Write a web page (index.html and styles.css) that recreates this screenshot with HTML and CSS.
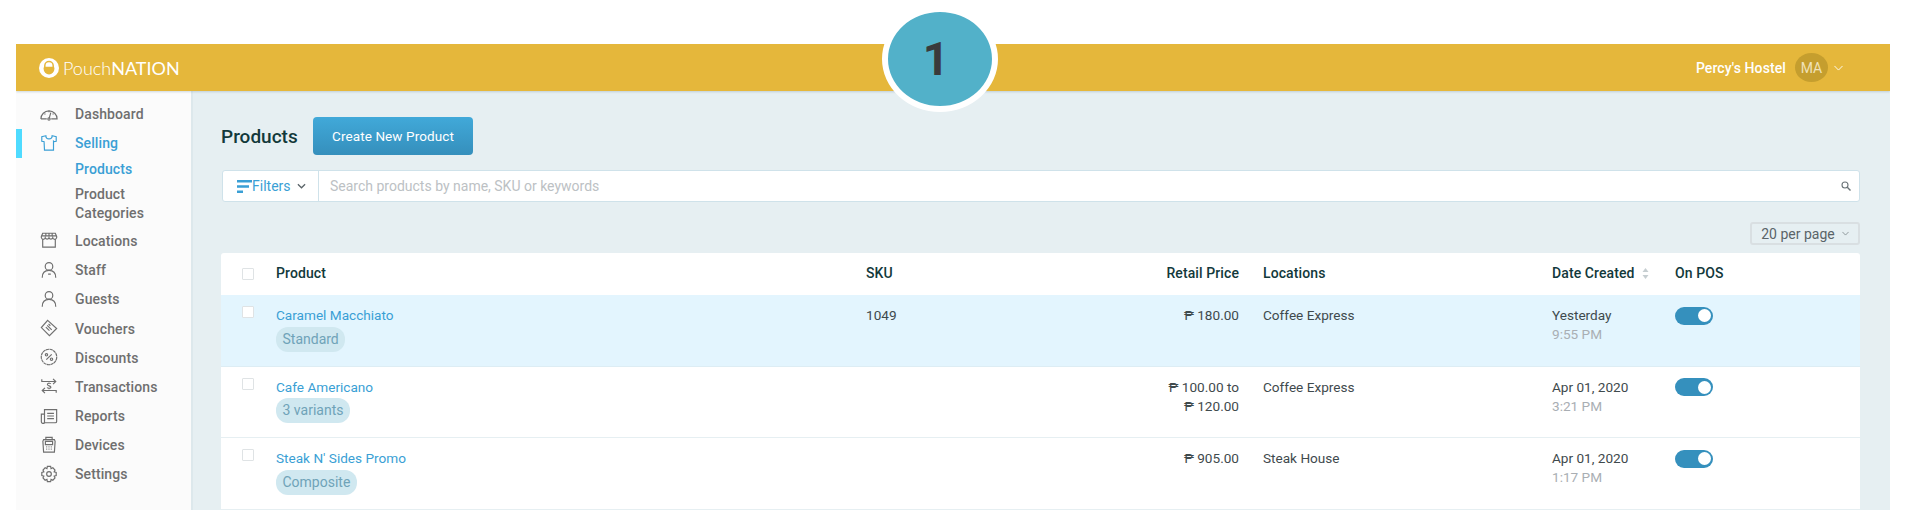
FILE: index.html
```html
<!DOCTYPE html>
<html lang="en">
<head>
<meta charset="utf-8">
<title>Products</title>
<link rel="stylesheet" href="styles.css">
</head>
<body>
<div class="app">
  <header class="topbar">
    <div class="brand">
      <svg class="brand-icon" viewBox="0 0 20 20"><circle cx="10" cy="10" r="10" fill="#fff"/><path d="M4.600 9.600h10.800v1.400a5.400 5.400 0 0 1-10.800 0z" fill="#E5B73B"/><path d="M5.800 9.600V7.800a4.200 4.200 0 0 1 8.400 0v1.800M5 9.600h10" fill="none" stroke="#E5B73B" stroke-width="1.500"/></svg>
      <span class="wordmark">Pouch<b>NATION</b></span>
    </div>
    <div class="account">
      <span class="account-name">Percy's Hostel</span>
      <span class="avatar">MA</span>
      <svg class="account-chevron" viewBox="0 0 10 6"><path d="M.5.700 5 5.300 9.500.7" fill="none" stroke="#fff" stroke-width="1"/></svg>
    </div>
  </header>
  <div class="body">
    <aside class="sidebar">
      <nav class="nav">
        <a class="nav-item"><svg class="nav-icon" viewBox="0 0 20 20"><path d="M1 15.500A9 9 0 0 1 19 15.500H12.500M7.500 15.500H1M10 15.500l2-7" /><circle cx="10" cy="15.500" r="1.300"/><path d="M5 9.500l1 1M15 9.500l-1 1M10 6.500v1.500"/></svg>Dashboard</a>
        <a class="nav-item is-active"><svg class="nav-icon" viewBox="0 0 20 20"><path d="M6.500 2 2 3v5l2.500.5V8L5 18h10V8l.5.5L18 8V3l-4.500-1a3.500 3.500 0 0 1-7 0z"/></svg>Selling</a>
        <a class="nav-sub is-current">Products</a>
        <a class="nav-sub">Product Categories</a>
        <a class="nav-item"><svg class="nav-icon" viewBox="0 0 20 20"><path d="M3 2.500h14l1.500 3.500v1.500a2.200 2.200 0 0 1-4.300 0 2.200 2.200 0 0 1-4.200 0 2.200 2.200 0 0 1-4.200 0 2.200 2.200 0 0 1-4.300 0V6zM3 9.500V18h14V9.500M1.500 5.500h17M6.500 2.500v3M13.500 2.500v3M10 2.500v3"/></svg>Locations</a>
        <a class="nav-item"><svg class="nav-icon" viewBox="0 0 20 20"><circle cx="10" cy="6" r="4.200"/><path d="M2.500 18.500c0-5 3-8 7.500-8s7.500 3 7.500 8M9 14.500h3"/></svg>Staff</a>
        <a class="nav-item"><svg class="nav-icon" viewBox="0 0 20 20"><circle cx="10" cy="6" r="4.200"/><path d="M2.500 18.500c0-5 3-8 7.500-8s7.500 3 7.500 8"/></svg>Guests</a>
        <a class="nav-item"><svg class="nav-icon" viewBox="0 0 20 20"><path d="M8.500 1.500 18.500 10.500 10.500 18.500 1.500 9.500zM8 7l5 5M6.500 9l4 4M9.500 5.500l2 2" /></svg>Vouchers</a>
        <a class="nav-item"><svg class="nav-icon" viewBox="0 0 20 20"><circle cx="10" cy="10" r="8.600" stroke-dasharray="3.600 .5"/><path d="M13 7l-6 6"/><circle cx="7.200" cy="7.600" r="1.300"/><circle cx="12.800" cy="12.400" r="1.300"/></svg>Discounts</a>
        <a class="nav-item"><svg class="nav-icon" viewBox="0 0 20 20"><path d="M2 2.500v2.500h15M14.500 2l3 3-3 3M18 17.500V15H3M5.500 12l-3 3 3 3"/><path d="M12 7.500c-.5-.8-3.800-1-3.800.8s3.900 1.300 3.900 3-3.500 1.400-4.200.4M10 6v1M10 12.500v1"/></svg>Transactions</a>
        <a class="nav-item"><svg class="nav-icon" viewBox="0 0 20 20"><path d="M5 17.500h12a1.500 1.500 0 0 0 1.500-1.500V3H5v14.500a2 2 0 0 1-3.500-1V8H5M8 7h7.500M8 10h7.500M8 13h7.500"/></svg>Reports</a>
        <a class="nav-item"><svg class="nav-icon" viewBox="0 0 20 20"><path d="M6.500 4V1.500h7V4M4 4h12l.8 2-.8 12H4L3.200 6zM6 6h8v3.500H6zM7 12h1M9.500 12h1M12 12h1M7 14.500h1M9.500 14.500h1M12 14.500h1"/></svg>Devices</a>
        <a class="nav-item"><svg class="nav-icon" viewBox="0 0 20 20"><path d="M8.200 1.500h3.600l.5 2.500 2-.9 2.400 2.500-1 2 2.300.7v3.400l-2.300.7 1 2-2.400 2.500-2-.9-.5 2.500H8.200l-.5-2.500-2 .9-2.400-2.500 1-2-2.300-.7V8.300l2.300-.7-1-2 2.400-2.500 2 .9z"/><circle cx="10" cy="10" r="2.600"/></svg>Settings</a>
      </nav>
    </aside>
    <main class="content">
      <div class="page-head">
        <h1 class="page-title">Products</h1>
        <button class="btn-create">Create New Product</button>
      </div>
      <div class="search-bar">
        <div class="filters">
          <svg class="filters-icon" viewBox="0 0 15 13"><path d="M0 1.300h15M0 6.500h12M0 11.700h6" fill="none" stroke="#3A9FD5" stroke-width="2.400"/></svg>
          <span>Filters</span>
          <svg class="filters-chevron" viewBox="0 0 10 6"><path d="M1 1l4 4 4-4" fill="none" stroke="#5a6468" stroke-width="1.400"/></svg>
        </div>
        <div class="search-field">
          <span class="placeholder">Search products by name, SKU or keywords</span>
          <svg class="search-icon" viewBox="0 0 10 10"><circle cx="4" cy="4" r="3" fill="none" stroke="#6b7478" stroke-width="1.100"/><path d="M6.300 6.300 9.500 9.500" stroke="#6b7478" stroke-width="1.400"/></svg>
        </div>
      </div>
      <div class="per-page-row">
        <div class="per-page">20 per page <svg class="per-chevron" viewBox="0 0 8 5"><path d="M.5.700 4 4.300 7.500.7" fill="none" stroke="#7a8488" stroke-width=".9"/></svg></div>
      </div>
      <section class="table">
        <div class="row row-head">
          <span class="check"></span>
          <span>Product</span>
          <span>SKU</span>
          <span class="num">Retail Price</span>
          <span>Locations</span>
          <span class="sortable">Date Created <svg class="sort-icon" viewBox="0 0 7 11"><path d="M3.500 0 6.500 4h-6zM3.500 11 .5 7h6z" fill="#c6ced1"/></svg></span>
          <span>On POS</span>
        </div>
        <div class="row is-selected">
          <span class="check"></span>
          <div><a class="name">Caramel Macchiato</a><span class="pill">Standard</span></div>
          <span>1049</span>
          <span class="num">₱ 180.00</span>
          <span>Coffee Express</span>
          <div>Yesterday<span class="time">9:55 PM</span></div>
          <span class="toggle"></span>
        </div>
        <div class="row">
          <span class="check"></span>
          <div><a class="name">Cafe Americano</a><span class="pill">3 variants</span></div>
          <span></span>
          <span class="num">₱ 100.00 to<br>₱ 120.00</span>
          <span>Coffee Express</span>
          <div>Apr 01, 2020<span class="time">3:21 PM</span></div>
          <span class="toggle"></span>
        </div>
        <div class="row">
          <span class="check"></span>
          <div><a class="name">Steak N' Sides Promo</a><span class="pill">Composite</span></div>
          <span></span>
          <span class="num">₱ 905.00</span>
          <span>Steak House</span>
          <div>Apr 01, 2020<span class="time">1:17 PM</span></div>
          <span class="toggle"></span>
        </div>
      </section>
    </main>
  </div>
</div>
<div class="step-badge">1</div>
</body>
</html>
```
FILE: styles.css
```css
* { box-sizing: border-box; }
html, body { margin: 0; height: 526px; overflow: hidden; background: #fff; }
body { font-family: Roboto, "Liberation Sans", sans-serif; font-size: 14px; color: #3f4a4d; padding: 44px 16px 0; }

.app { height: 466px; overflow: hidden; display: flex; flex-direction: column; background: #E6EFF2; }

.topbar { flex: none; height: 47px; background: #E5B73B; display: flex; align-items: center; justify-content: space-between; padding: 0 47px 0 23px; box-shadow: 0 1px 2px rgba(120,150,160,.35); position: relative; z-index: 1; }
.brand { display: flex; align-items: center; gap: 4px; }
.brand-icon { width: 20px; height: 20px; }
.wordmark { font-family: Lato, sans-serif; font-weight: 300; font-size: 18px; color: #fff; }
.wordmark b { font-weight: 400; }
.account { display: flex; align-items: center; color: #fff; }
.account-name { font-weight: 500; font-size: 14px; letter-spacing: .1px; }
.avatar { width: 33px; height: 29px; margin-left: 9px; border-radius: 50%; background: #C59E2E; color: #f0e2b8; font-size: 14px; display: flex; align-items: center; justify-content: center; }
.account-chevron { width: 9px; height: 6px; margin-left: 6px; }

.body { flex: 1; display: flex; min-height: 0; }

.sidebar { flex: none; width: 177px; background: #FBFBFB; border-right: 2px solid #DDE8EC; padding-top: 8.500px; }
.nav { display: flex; flex-direction: column; }
.nav-item { height: 29.200px; display: flex; align-items: center; padding-left: 59px; position: relative; color: #6f6f6f; font-weight: 500; font-size: 14px; letter-spacing: .1px; }
.nav-icon { position: absolute; left: 24px; top: 4px; width: 18px; height: 20px; fill: none; stroke: #6f6f6f; stroke-width: 1.300; }
.nav-item.is-active { color: #3A9FD5; }
.nav-item.is-active::before { content: ""; position: absolute; left: 0; top: 0; bottom: 0; width: 6px; background: #4FDBFF; }
.is-active .nav-icon { stroke: #3A9FD5; }
.nav-sub { display: block; padding: 2px 30px 2px 59px; line-height: 19px; color: #6f6f6f; font-weight: 500; font-size: 14px; letter-spacing: .1px; }
.nav-sub.is-current { color: #3A9FD5; margin-top: .5px; margin-bottom: 1.500px; }
.nav-sub + .nav-item { margin-top: 1.500px; }

.content { flex: 1; min-width: 0; padding: 26px 30px 0 28px; }
.page-head { display: flex; align-items: center; gap: 15px; }
.page-title { margin: 0; font-size: 19px; font-weight: 500; color: #12393b; width: 77px; white-space: nowrap; }
.btn-create { width: 160px; height: 38px; border: 0; border-radius: 4px; background: linear-gradient(#41A9D9, #358FBC); color: #fff; font: 400 13.500px Roboto, sans-serif; letter-spacing: .1px; }

.search-bar { margin: 15px 0 0 1px; height: 32px; display: flex; background: #fff; border: 1.500px solid #CFE2EA; border-radius: 3px; font-size: 14px; }
.filters { flex: none; width: 96px; display: flex; align-items: center; padding-left: 14px; border-right: 1.500px solid #CFE2EA; color: #3A9FD5; }
.filters-icon { width: 15px; height: 13px; }
.filters-chevron { width: 9px; height: 6px; margin-left: 6px; }
.search-field { flex: 1; display: flex; align-items: center; justify-content: space-between; padding: 0 8px 0 11px; }
.placeholder { color: #bcc1c4; }
.search-icon { width: 10px; height: 10px; }

.per-page-row { display: flex; justify-content: flex-end; margin-top: 20px; }
.per-page { width: 110px; height: 23px; display: flex; align-items: center; justify-content: center; gap: 7px; border: 2px solid #D9DFE2; border-radius: 3px; font-size: 14px; color: #5a6468; }
.per-chevron { width: 7px; height: 5px; }

.table { margin-top: 8px; background: #fff; border-radius: 3px 3px 0 0; }
.row { display: grid; grid-template-columns: 55px 590px 100px 297px 289px 123px 1fr; height: 71.500px; padding-top: 11px; line-height: 19px; border-bottom: 1.500px solid #E6EFF2; font-size: 13.600px; }
.row-head { height: 42px; padding-top: 11px; border-bottom: 0; font-size: 14px; letter-spacing: .1px; font-weight: 500; color: #12393b; }
.row-head .check { margin-top: 4px; }
.row.is-selected { background: #E3F5FE; border-bottom-color: #DDEDF4; }
.check { width: 12px; height: 12px; margin: 0 0 0 21px; background: #fff; border: 1.500px solid #dfe3e5; border-radius: 1px; display: block; }
.name { display: block; color: #3A9FD5; }
.pill { display: inline-block; margin-top: 1.500px; height: 25px; line-height: 24px; padding: 0 6.500px; border-radius: 12px; background: #D0E8F0; color: #6FA3B8; font-size: 14px; }
.num { text-align: right; padding-right: 24px; }
.sortable { display: flex; align-items: center; gap: 7px; height: 19px; }
.sort-icon { width: 7px; height: 11px; }
.time { display: block; color: #a9aeb3; }
.toggle { position: relative; display: block; width: 38px; height: 18px; margin-top: .5px; border-radius: 9px; background: #3590BD; }
.toggle::after { content: ""; position: absolute; right: 2px; top: 2.500px; width: 13px; height: 13px; border-radius: 50%; background: #fff; }

.step-badge { position: absolute; left: 882px; top: 6px; width: 116px; height: 106px; border: 6px solid #fff; border-radius: 50%; background: #52B1C9; color: #3a3a3a; font: 700 46px/94px Roboto, sans-serif; text-align: center; padding-right: 8px; z-index: 2; }
```
